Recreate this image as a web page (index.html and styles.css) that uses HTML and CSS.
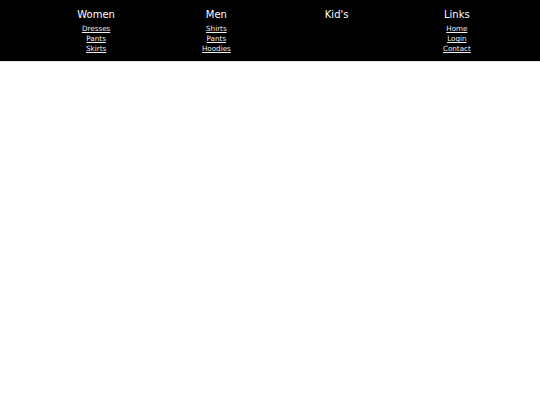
FILE: index.html
```html
<!DOCTYPE html>
<html>
<head>
<meta charset="utf-8">
<link rel="stylesheet" href="styles.css">
</head>
<body>
<nav class="nav">
  <div class="col">
    <div class="title">Women</div>
    <a href="#">Dresses</a>
    <a href="#">Pants</a>
    <a href="#">Skirts</a>
  </div>
  <div class="col">
    <div class="title">Men</div>
    <a href="#">Shirts</a>
    <a href="#">Pants</a>
    <a href="#">Hoodies</a>
  </div>
  <div class="col">
    <div class="title">Kid's</div>
  </div>
  <div class="col">
    <div class="title">Links</div>
    <a href="#">Home</a>
    <a href="#">Login</a>
    <a href="#">Contact</a>
  </div>
</nav>
</body>
</html>
```
FILE: styles.css
```css
html, body {
  margin: 0;
  padding: 0;
  background: #fff;
  font-family: "DejaVu Sans", sans-serif;
}
.nav {
  background: #000;
  height: 61px;
  border-bottom: 1px solid #e6e6e6;
  display: grid;
  grid-template-columns: repeat(4, 120.25px);
  padding-left: 36px;
  box-sizing: content-box;
}
.col {
  display: flex;
  flex-direction: column;
  align-items: center;
  padding-top: 8px;
}
.title {
  color: #fff;
  font-size: 10px;
  line-height: 13px;
  margin-bottom: 3px;
}
.col a {
  color: #f0f0f0;
  font-size: 7.2px;
  line-height: 10px;
  text-decoration: underline;
}
```
